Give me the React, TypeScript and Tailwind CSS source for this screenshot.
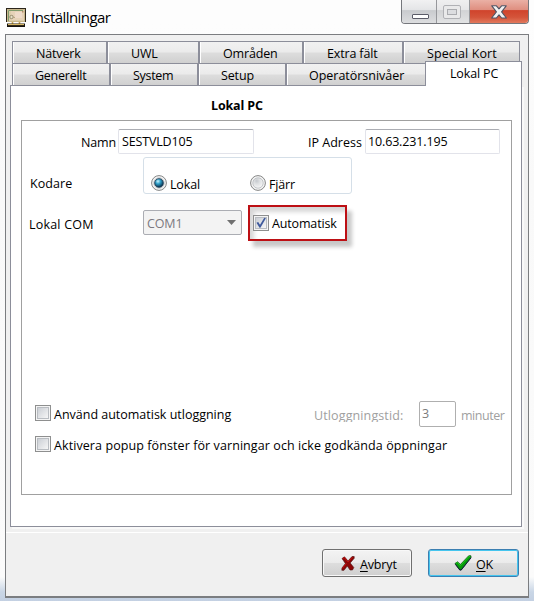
import React from 'react';

function Tab({ label, className, pad }: { label: string; className: string; pad: string }) {
  return (
    <div
      className={`h-[21px] shrink-0 border-l border-white bg-[linear-gradient(#f1f1f1_0%,#ebebeb_48%,#dddddd_52%,#d0d0d0_100%)] pt-[3px] ${className} ${pad}`}
    >
      {label}
    </div>
  );
}

function Divider() {
  return <div className="h-[21px] w-[2px] shrink-0 bg-[#8c8e9a]" />;
}

function CheckBox({ checked }: { checked?: boolean }) {
  return (
    <div className="h-4 w-4 shrink-0 border border-[#8e8f8f] bg-[#f4f4f4] p-px">
      <div className="relative h-3 w-3 border border-[#b9bdc2] bg-[linear-gradient(135deg,#cbcfd5,#f6f6f6)]">
        {checked && (
          <svg className="absolute -left-px -top-px" width="12" height="12" viewBox="0 0 12 12">
            <path d="M1.5 5.8 L3.2 4.9 L5 7.7 L9.3 .8 L10.9 1.2 L5.4 10.8 L4.5 10.8 Z" fill="#3f5a9d" />
          </svg>
        )}
      </div>
    </div>
  );
}

function Radio({ id, checked }: { id: string; checked?: boolean }) {
  return (
    <svg className="shrink-0" width="16" height="16" viewBox="0 0 16 16">
      <defs>
        <radialGradient id={id} cx=".38" cy=".3" r=".75">
          <stop offset="0" stopColor={checked ? '#c8f4ff' : '#c5c9cd'} />
          <stop offset=".4" stopColor={checked ? '#2f9fc8' : '#dfe1e3'} />
          <stop offset="1" stopColor={checked ? '#06233f' : '#f8f8f8'} />
        </radialGradient>
      </defs>
      <circle cx="8" cy="8" r="7.4" fill="#f4f4f4" stroke="#858686" />
      <circle cx="8" cy="8" r="5.2" fill={checked ? '#e4e8ea' : `url(#${id})`} stroke="#b5b9bd" strokeWidth=".8" />
      {checked && <circle cx="8" cy="8" r="4.3" fill={`url(#${id})`} stroke="#12344f" strokeWidth=".8" />}
    </svg>
  );
}

function TitleIcon() {
  return (
    <svg className="mt-2 shrink-0" width="20" height="19" viewBox="0 0 20 19">
      <rect width="20" height="14" fill="#2b251b" />
      <rect x="1" y="1" width="18" height="13" fill="#c9b78c" />
      <rect x="2" y="2" width="16" height="11" fill="#dccdaa" />
      <path d="M2.5 13V2.5H17" fill="none" stroke="#7f9a6c" />
      <rect x="5" y="3" width="13" height="9" fill="#e6d2b8" />
      <rect x="9" y="4" width="7" height="6" fill="#eedac9" />
      <circle cx="5.5" cy="9" r="1.7" fill="#e6dfc8" stroke="#84785c" strokeWidth=".8" />
      <path d="M7 9.5H9" stroke="#b5a583" />
      <rect x="16" y="3" width="1.5" height="1.5" fill="#b58b6a" />
      <path d="M6.5 14V17M13.5 14V17" stroke="#caa655" strokeWidth="1.6" />
      <rect x="1" y="15.5" width="18" height="3.5" fill="#16120c" />
      <path d="M2 16.5H18" stroke="#d8b765" strokeWidth="1.3" />
    </svg>
  );
}

function CaptionButtons() {
  return (
    <div className="ml-auto mr-[5px] flex h-6 w-[128px] overflow-hidden rounded-b-[4px] border border-t-0 border-[#75777c]">
      <div className="flex w-[35px] justify-center border-r border-[#96979b] bg-[linear-gradient(#f1f1f2_0%,#e4e5e7_42%,#c9cbce_46%,#dcdddf_100%)] pt-[14px]">
        <div className="ml-[3px] h-[5px] w-[17px] rounded-[1px] border border-[#5b5c68] bg-white" />
      </div>
      <div className="flex w-[33px] justify-center border-r border-[#96979b] bg-[linear-gradient(#efeff0_0%,#e6e6e8_42%,#d2d3d5_46%,#e2e3e4_100%)] pt-[5px]">
        <div className="ml-[-2px] flex h-[14px] w-[18px] items-center justify-center rounded-[2px] border border-[#b0b1b5] bg-[#e9e9ea]">
          <div className="h-[6px] w-[10px] border border-[#aaabaf] bg-[#dcdde0]" />
        </div>
      </div>
      <div className="flex flex-1 justify-center bg-[linear-gradient(#eab0a5_0%,#df8f80_42%,#d0442c_46%,#d4543a_75%,#e2795c_100%)] pt-[5px]">
        <svg width="16" height="14" viewBox="0 0 16 14">
          <path
            d="M.8 .8H5.4L8 3.9L10.6 .8H15.2L10.6 6.8L15.4 13H10.6L8 9.9L5.4 13H.6L5.4 6.8Z"
            fill="#f2f2f2"
            stroke="#505565"
            strokeWidth="1.1"
            strokeLinejoin="round"
          />
        </svg>
      </div>
    </div>
  );
}

export default function App() {
  return (
    <div className="flex h-[601px] w-[534px] flex-col overflow-hidden bg-[linear-gradient(#fdfdfd_0%,#fdfdfd_4%,#f9f9f9_30%,#fbfbfb_96%,#c9d6e6_98.5%,#c3d0e2_100%)] font-['Open_Sans','Noto_Sans',sans-serif] text-[12.5px] leading-[18px] tracking-[-0.15px] whitespace-nowrap text-black">
      <div className="flex h-[34px] shrink-0 pl-[6px]">
        <TitleIcon />
        <div className="ml-[5px] mt-[7px] text-[15px] leading-5 tracking-[-0.55px]">Inställningar</div>
        <CaptionButtons />
      </div>

      <div className="ml-[5px] flex h-[564px] w-[524px] shrink-0 flex-col border border-b-2 border-[#7b7d80] bg-[#f0f0f0]">
        <div className="ml-[6px] mt-[6px] flex h-[22px] w-[508px] shrink-0 border-x border-t border-[#8c8e9a]">
          <Tab label="Nätverk" className="w-[93px]" pad="pl-[22px]" />
          <Divider />
          <Tab label="UWL" className="w-[90px]" pad="pl-[22px]" />
          <Divider />
          <Tab label="Områden" className="w-[102px]" pad="pl-[22px]" />
          <Divider />
          <Tab label="Extra fält" className="w-[98px]" pad="pl-[22px]" />
          <Divider />
          <Tab label="Special Kort" className="w-[115px] tracking-[0.08px]" pad="pl-[22px]" />
        </div>
        <div className="ml-[6px] flex h-[22px] shrink-0 items-start">
          <div className="flex h-[22px] w-[413px] shrink-0 border-l border-t border-[#8c8e9a]">
            <Tab label="Generellt" className="w-[96px] tracking-[-0.25px]" pad="pl-[21px]" />
            <Divider />
            <Tab label="System" className="w-[86px] tracking-[-0.3px]" pad="pl-[21px]" />
            <Divider />
            <Tab label="Setup" className="w-[86px]" pad="pl-[21px]" />
            <Divider />
            <Tab label="Operatörsnivåer" className="w-[138px] tracking-[-0.02px]" pad="pl-[21px]" />
          </div>
          <div className="relative z-10 -mt-[2px] h-[25px] w-[97px] border border-b-0 border-[#8c8e9a] bg-white pl-[24px] pt-[3px]">
            Lokal PC
          </div>
        </div>

        <div className="ml-[4px] flex h-[442px] w-[512px] shrink-0 flex-col border border-[#8c8e9a] bg-white shadow-[2px_2px_0_#f9f9f9]">
          <div className="ml-[200px] mt-[11px] h-4 font-bold tracking-[-0.15px]">Lokal PC</div>
          <div className="ml-[10px] mt-[7px] flex h-[375px] w-[491px] shrink-0 flex-col border border-[#a0a0a0]">
            <div className="mt-[8px] flex h-[25px] shrink-0">
              <div className="w-[96px] pr-[2px] pt-[5px] text-right">Namn</div>
              <div className="h-[25px] w-[136px] rounded-[2px] border border-[#e2e3ea] border-t-[#abadb3] pl-[3px] pt-[3px]">SESTVLD105</div>
              <div className="w-[111px] pr-[3px] pt-[5px] text-right tracking-[0.03px]">IP Adress</div>
              <div className="h-[25px] w-[135px] rounded-[2px] border border-[#e2e3ea] border-t-[#abadb3] pl-[2px] pt-[3px]">10.63.231.195</div>
            </div>
            <div className="mt-[3px] flex h-[37px] shrink-0">
              <div className="w-[121px] pl-[8px] pt-[18px] tracking-[0.05px]">Kodare</div>
              <div className="flex h-[37px] w-[209px] rounded-[3px] border border-[#d5dfe8] pl-[7px] pt-[17px]">
                <Radio id="radio-on" checked />
                <div className="w-[83px] pl-[3px] pt-px">Lokal</div>
                <Radio id="radio-off" />
                <div className="pl-[3px] pt-px">Fjärr</div>
              </div>
            </div>
            <div className="mt-[11px] flex h-[37px] shrink-0">
              <div className="w-[121px] pl-[7px] pt-[11px] tracking-[0.2px]">Lokal COM</div>
              <div className="mt-[5px] flex h-[25px] w-[99px] items-start justify-between rounded-[2px] border border-[#abadb3] bg-[#f3f3f3] pl-[3px] pr-[5px] pt-[4px] text-[#7b7980]">
                <span>COM1</span>
                <svg className="mt-[5px]" width="9" height="5" viewBox="0 0 9 5">
                  <path d="M0 0H9L4.5 5Z" fill="#707070" />
                </svg>
              </div>
              <div className="ml-[6px] flex h-[36px] w-[99px] border-2 border-[#bd0f14] pl-[3px] pt-[8px] shadow-[5px_6px_4px_rgba(0,0,0,0.22),inset_4px_5px_4px_rgba(0,0,0,0.16)]">
                <CheckBox checked />
                <div className="pl-[3px]">Automatisk</div>
              </div>
            </div>
            <div className="mt-[159px] flex h-[26px] shrink-0 pl-[13px]">
              <div className="mt-[4px] flex w-[279px]">
                <CheckBox />
                <div className="pl-[3px] pt-px tracking-[-0.01px]">Använd automatisk utloggning</div>
              </div>
              <div className="mt-[6px] h-[15px] w-[105px] overflow-hidden tracking-[0.12px] text-[#a0a0a0]">Utloggningstid:</div>
              <div className="h-[26px] w-[37px] rounded-[2px] border border-[#afafaf] pl-[2px] pt-[3px] text-[#7b7b7b]">3</div>
              <div className="pl-[5px] pt-[6px] tracking-[-0.45px] text-[#a0a0a0]">minuter</div>
            </div>
            <div className="mt-[9px] flex pl-[13px]">
              <CheckBox />
              <div className="pl-[3px] pt-px tracking-[0.085px]">Aktivera popup fönster för varningar och icke godkända öppningar</div>
            </div>
          </div>
        </div>

        <div className="mt-[5px] flex flex-1 border-t border-white pl-[316px] pt-[16px]">
          <button className="flex h-[28px] w-[90px] items-start rounded-[3px] border border-[#707070] bg-[linear-gradient(#f3f3f3_0%,#ebebeb_48%,#dddddd_52%,#cfcfcf_100%)] pl-[18px] pt-[6px] shadow-[inset_0_0_0_1px_#f8f8f8]">
            <svg width="14" height="15" viewBox="0 0 14 15">
              <path d="M1 2.5L3.5 .8L7 5L11 .5H13.2V2.3L9.2 7L12.8 11.5L11.5 14H9L6.3 10L3 14.3H.8L1 12L4.4 7.5Z" fill="#8c0606" stroke="#4c1010" strokeWidth=".6" />
              <path d="M1.6 2.7L3.4 1.6L7 6L11.4 1.2M1.4 12.4L5.4 7.4" fill="none" stroke="#c50d0d" />
            </svg>
            <span className="ml-[5px]"><span className="underline underline-offset-2">A</span>vbryt</span>
          </button>
          <button className="ml-[16px] flex h-[28px] w-[91px] items-start rounded-[3px] border border-[#3c7fb1] bg-[linear-gradient(#f3f3f3_0%,#ebebeb_48%,#dddddd_52%,#cfcfcf_100%)] pl-[25px] pt-[5px] shadow-[inset_0_0_0_1px_#45c5ee]">
            <svg width="18" height="16" viewBox="0 0 18 16">
              <path d="M1 8.5L3.5 6.8L6.4 9.5L14.7 .8H17V2.5L7.2 15H5.7Z" fill="#079a0b" stroke="#06370b" strokeWidth=".7" />
              <path d="M1.8 8.3L3.5 7.4L6.4 10.5L15 1.3H16.4" fill="none" stroke="#1ed321" />
              <path d="M1.3 9.3L5.9 15H7.2L17 2.9" fill="none" stroke="#101342" strokeWidth=".9" />
            </svg>
            <span className="ml-[4px] mt-px"><span className="underline underline-offset-2">O</span>K</span>
          </button>
        </div>
      </div>
    </div>
  );
}
